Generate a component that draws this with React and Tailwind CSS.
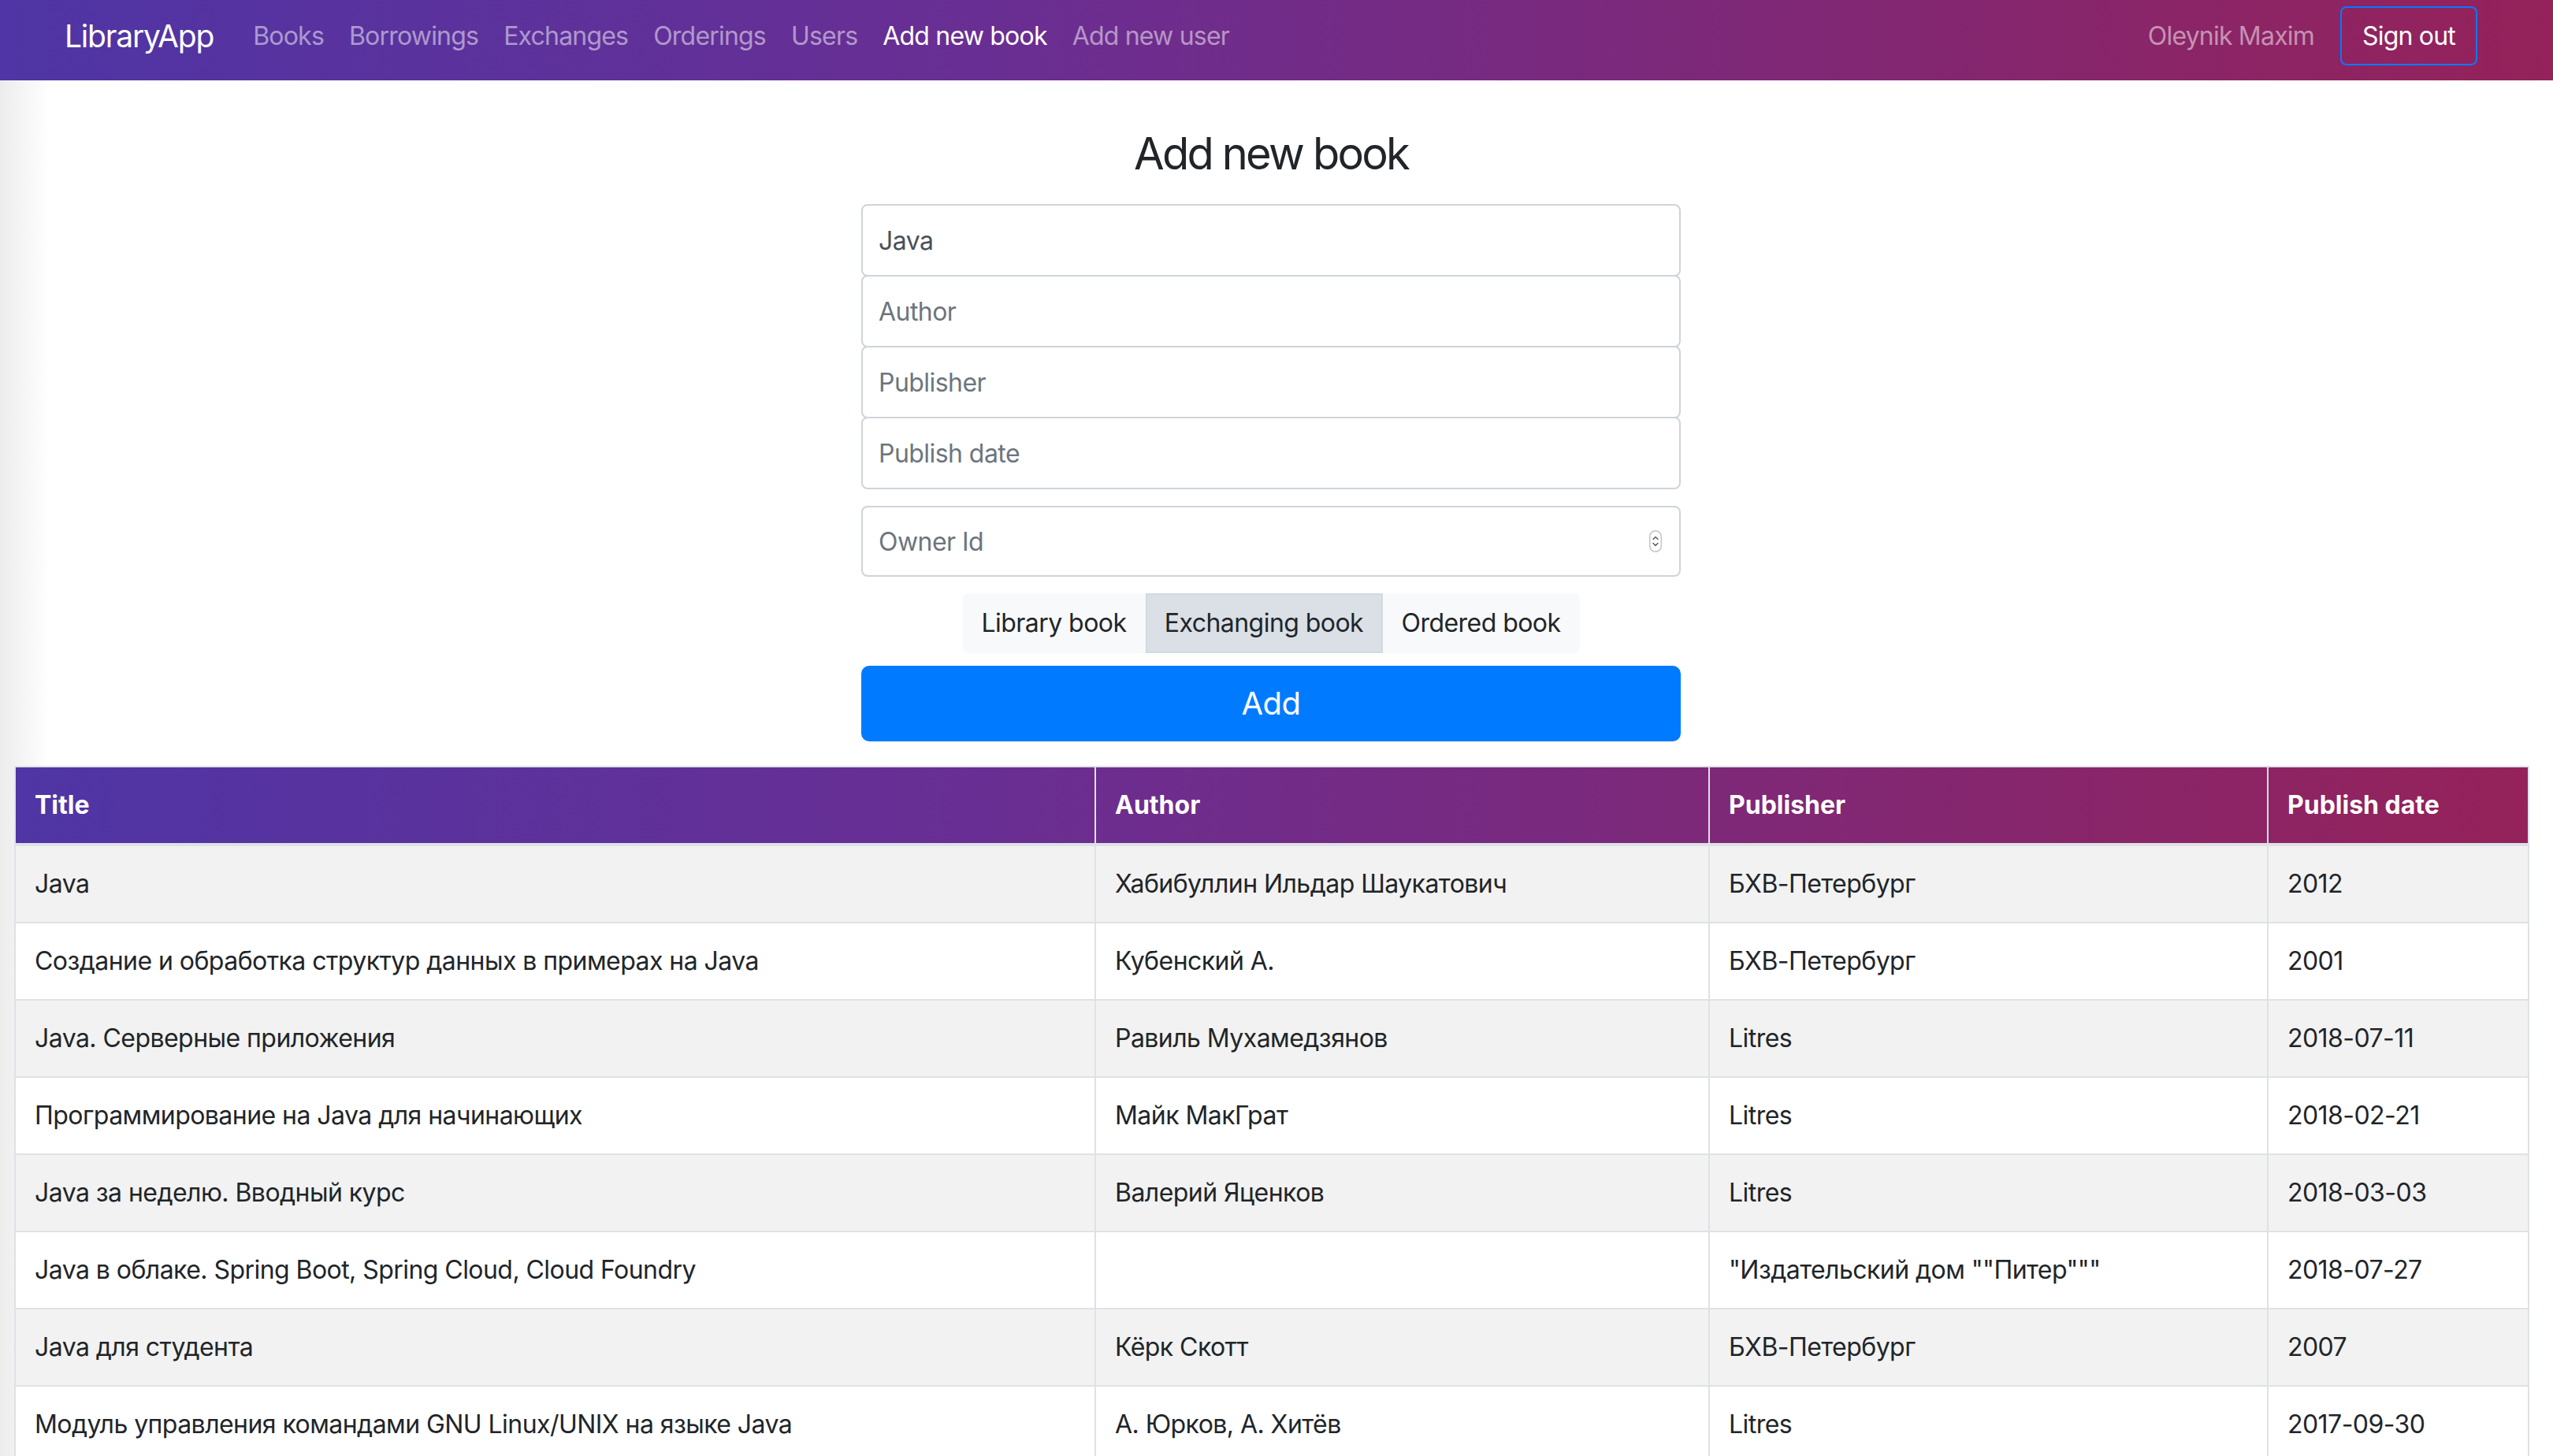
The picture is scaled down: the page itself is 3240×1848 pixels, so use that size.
import { useState } from 'react';

const NAV_LINKS = ['Books', 'Borrowings', 'Exchanges', 'Orderings', 'Users', 'Add new book', 'Add new user'];
const ACTIVE_LINK = 'Add new book';

// label + button width taken from the design
const BOOK_TYPES = [
  { label: 'Library book', width: 'w-[232px]' },
  { label: 'Exchanging book', width: 'w-[301px]' },
  { label: 'Ordered book', width: 'w-[250px]' },
];

// title, author, publisher, publish date
const BOOKS = [
  ['Java', 'Хабибуллин Ильдар Шаукатович', 'БХВ-Петербург', '2012'],
  ['Создание и обработка структур данных в примерах на Java', 'Кубенский А.', 'БХВ-Петербург', '2001'],
  ['Java. Серверные приложения', 'Равиль Мухамедзянов', 'Litres', '2018-07-11'],
  ['Программирование на Java для начинающих', 'Майк МакГрат', 'Litres', '2018-02-21'],
  ['Java за неделю. Вводный курс', 'Валерий Яценков', 'Litres', '2018-03-03'],
  ['Java в облаке. Spring Boot, Spring Cloud, Cloud Foundry', '', '"Издательский дом ""Питер"""', '2018-07-27'],
  ['Java для студента', 'Кёрк Скотт', 'БХВ-Петербург', '2007'],
  ['Модуль управления командами GNU Linux/UNIX на языке Java', 'А. Юрков, А. Хитёв', 'Litres', '2017-09-30'],
];

const COLS = 'grid grid-cols-[1369px_779px_709px_331px]';
const GRADIENT = 'bg-[linear-gradient(to_right,#4f35a5,#6a2e92_40%,#95225a)]';

function Spinner() {
  return (
    <svg width="16" height="28" viewBox="0 0 16 28" className="shrink-0">
      <rect x="0.75" y="0.75" width="14.5" height="26.5" rx="7.25" fill="#fff" stroke="#c4c4c4" strokeWidth="1.5" />
      <path d="M5 11.5 L8 8.5 L11 11.5" fill="none" stroke="#555" strokeWidth="1.4" strokeLinecap="round" strokeLinejoin="round" />
      <path d="M5 16.5 L8 19.5 L11 16.5" fill="none" stroke="#555" strokeWidth="1.4" strokeLinecap="round" strokeLinejoin="round" />
    </svg>
  );
}

export default function App() {
  const [title, setTitle] = useState('Java');
  const [bookType, setBookType] = useState('Exchanging book');

  return (
    <div className="h-screen overflow-hidden bg-[linear-gradient(to_right,#ececec,#ffffff_64px)] font-['Inter','Noto_Sans',sans-serif] tracking-[-0.55px] text-[#212529]">
      <nav className={`flex h-[102px] items-start pl-[82px] pr-[96px] pt-[8px] ${GRADIENT}`}>
        <div className="flex h-[75px] w-full items-center">
          <a className="mr-[34px] text-[39px] leading-[60px] tracking-[-1.2px] text-white">LibraryApp</a>
          <ul className="flex tracking-[-0.8px]">
            {NAV_LINKS.map((link) => (
              <li
                key={link}
                className={`px-[16px] text-[32px] leading-[48px] ${link === ACTIVE_LINK ? 'text-white' : 'text-white/50'}`}
              >
                {link}
              </li>
            ))}
          </ul>
          <div className="ml-auto flex items-center tracking-[-0.8px]">
            <span className="text-[32px] leading-[48px] text-white/50">Oleynik Maxim</span>
            <button className="ml-[33px] h-[75px] rounded-[8px] border-2 border-[#007bff] px-[26px] text-[32px] leading-[48px] text-white">
              Sign out
            </button>
          </div>
        </div>
      </nav>

      <div className="w-[3226px]">
        <h3 className="mb-[30px] mt-[60px] text-center text-[56px] font-normal leading-[67px] tracking-[-2.8px]">Add new book</h3>

        <form className="mx-auto flex w-[1040px] flex-col">
          <input
            value={title}
            onChange={(e) => setTitle(e.target.value)}
            className="h-[92px] rounded-[8px] border-2 border-[#ced4da] bg-white px-[20px] text-[32px] text-[#495057] outline-none"
          />
          {['Author', 'Publisher', 'Publish date'].map((ph) => (
            <input
              key={ph}
              placeholder={ph}
              className="-mt-[2px] h-[92px] rounded-[8px] border-2 border-[#ced4da] bg-white px-[20px] text-[32px] text-[#495057] outline-none placeholder:text-[#6c757d]"
            />
          ))}

          <div className="mt-[21px] flex h-[90px] items-center rounded-[8px] border-2 border-[#ced4da] bg-white pl-[20px] pr-[22px]">
            <input
              placeholder="Owner Id"
              className="h-full flex-1 bg-transparent text-[32px] text-[#495057] outline-none placeholder:text-[#6c757d]"
            />
            <Spinner />
          </div>

          <div className="mt-[21px] flex justify-center">
            <div className="flex h-[76px] overflow-hidden rounded-[8px]">
              {BOOK_TYPES.map((type) => (
                <button
                  type="button"
                  key={type.label}
                  onClick={() => setBookType(type.label)}
                  className={`${type.width} border-2 text-[32px] leading-[48px] text-[#212529] ${
                    type.label === bookType ? 'border-[#d3d9df] bg-[#dae0e5]' : 'border-[#f8f9fa] bg-[#f8f9fa]'
                  }`}
                >
                  {type.label}
                </button>
              ))}
            </div>
          </div>

          <button type="button" className="mt-[16px] h-[96px] rounded-[10px] bg-[#007bff] text-[40px] leading-[60px] text-white">
            Add
          </button>
        </form>

        <div className="ml-[18px] mr-[16px] mt-[31px] border-x-2 border-t-2 border-[#dee2e6]">
          <div className={`${COLS} border-b-4 border-[#dee2e6] text-[32px] font-bold leading-[48px] tracking-normal text-white ${GRADIENT}`}>
            {['Title', 'Author', 'Publisher', 'Publish date'].map((h, i) => (
              <div key={h} className={`p-[24px] ${i > 0 ? 'border-l-2 border-[#dee2e6]' : ''}`}>
                {h}
              </div>
            ))}
          </div>
          {BOOKS.map((row, r) => (
            <div
              key={r}
              className={`${COLS} text-[32px] leading-[48px] ${r > 0 ? 'border-t-2 border-[#dee2e6]' : ''} ${
                r % 2 === 0 ? 'bg-[#f2f2f2]' : 'bg-white'
              }`}
            >
              {row.map((cell, i) => (
                <div key={i} className={`p-[24px] ${i > 0 ? 'border-l-2 border-[#dee2e6]' : ''}`}>
                  {cell}
                </div>
              ))}
            </div>
          ))}
        </div>
      </div>
    </div>
  );
}
